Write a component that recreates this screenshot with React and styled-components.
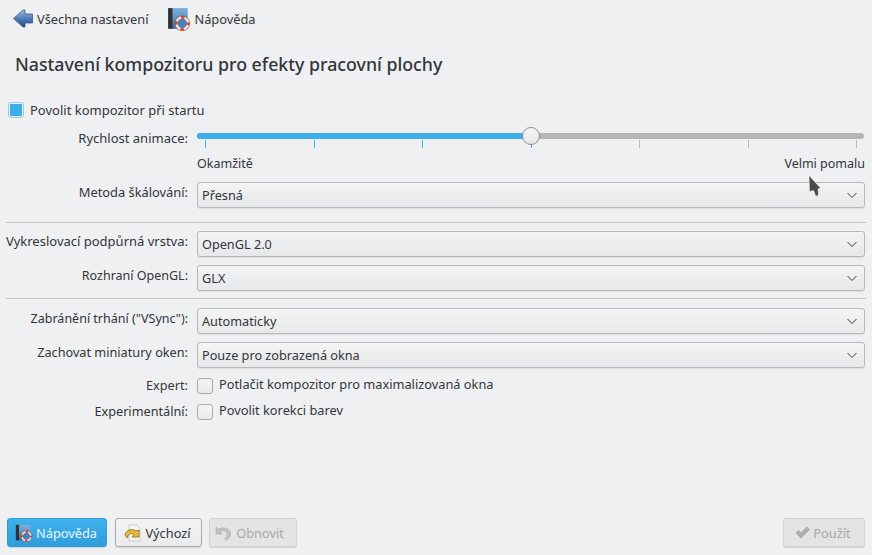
import React from 'react';
import styled, { createGlobalStyle } from 'styled-components';

const GlobalStyle = createGlobalStyle`
  html, body {
    margin: 0;
    padding: 0;
    background: #eff0f1;
  }
  body {
    font-family: "Noto Sans", "Open Sans", sans-serif;
    font-size: 13px;
    color: #31363b;
  }
`;

const Page = styled.div`
  position: relative;
  width: 872px;
  height: 555px;
  display: flex;
  flex-direction: column;
  box-sizing: border-box;
  overflow: hidden;
`;

const Toolbar = styled.div`
  display: flex;
  align-items: center;
  height: 38px;
  padding-left: 12px;
`;

const ToolItem = styled.div`
  display: flex;
  align-items: center;
  gap: 3px;
  margin-right: 19px;
  font-size: 12.8px;
  white-space: nowrap;
`;

const Title = styled.h1`
  margin: 0;
  padding: 14px 0 0 15px;
  height: 25px;
  line-height: 25px;
  font-size: 17.75px;
  font-weight: 500;
  white-space: nowrap;
`;

const TopCheck = styled.label`
  display: flex;
  align-items: center;
  gap: 6px;
  margin: 25px 0 0 8px;
  height: 16px;
`;

const CheckBox = styled.span`
  box-sizing: border-box;
  flex: none;
  width: 16px;
  height: 16px;
  border-radius: 3px;
  border: 1px solid ${p => (p.$on ? '#93cee9' : '#a9abad')};
  background: ${p => (p.$on ? '#eff0f1' : 'linear-gradient(#f4f5f5, #e8e9ea)')};
  padding: 1px;
  &::after {
    content: '';
    display: ${p => (p.$on ? 'block' : 'none')};
    width: 100%;
    height: 100%;
    background: #3daee9;
  }
`;

const Form = styled.div`
  display: grid;
  grid-template-columns: 188px 668px;
  column-gap: 9px;
  margin-top: 10px;
  align-items: start;
`;

const Label = styled.div`
  text-align: right;
  white-space: nowrap;
  font-size: ${p => p.$size || 12.7}px;
  line-height: ${p => p.$lh || 21}px;
`;

const Slider = styled.div`
  position: relative;
  height: 54px;
`;

const Track = styled.div`
  display: flex;
  height: 6px;
  margin: 5px 1px 0 0;
  border-radius: 3px;
  background: #b4b5b6;
  overflow: hidden;
`;

const TrackFill = styled.div`
  background: #3daee9;
`;

const Thumb = styled.div`
  position: absolute;
  box-sizing: border-box;
  top: -1px;
  width: 18px;
  height: 18px;
  margin-left: -9px;
  border-radius: 50%;
  border: 1px solid #8c8e90;
  background: linear-gradient(#f6f7f7, #e6e7e8);
`;

const Ticks = styled.div`
  display: flex;
  justify-content: space-between;
  padding: 1px 8px 0;
`;

const Tick = styled.span`
  width: 1px;
  height: 8px;
  background: ${p => (p.$on ? '#3daee9' : '#bcbdbe')};
`;

const SliderEnds = styled.div`
  display: flex;
  justify-content: space-between;
  margin-top: 7px;
  line-height: 18px;
  font-size: 12.5px;
`;

const Combo = styled.div`
  box-sizing: border-box;
  height: 26px;
  margin-bottom: ${p => p.$mb ?? 8}px;
  padding: 0 6px 0 4px;
  display: flex;
  align-items: center;
  justify-content: space-between;
  font-size: 12.7px;
  border: 1px solid #b6b8ba;
  border-radius: 3px;
  background: linear-gradient(#f3f4f4, #e7e8e9);
  box-shadow: 0 1px 1px rgba(0, 0, 0, 0.08);
`;

const Separator = styled.div`
  grid-column: 1 / -1;
  width: 860px;
  height: 1px;
  margin: ${p => p.$top}px 0 ${p => p.$bottom}px 6px;
  background: #c4c5c7;
`;

const CheckRow = styled.label`
  display: flex;
  align-items: center;
  gap: 6px;
  height: 15px;
  margin-bottom: 11px;
  font-size: 12.8px;
  white-space: nowrap;
`;

const CheckText = styled.span`
  margin-top: -2px;
  line-height: 15px;
`;

const Footer = styled.div`
  margin-top: auto;
  display: flex;
  padding: 0 7px 8px;
  gap: 7px;
`;

const Button = styled.button`
  box-sizing: border-box;
  height: 29px;
  width: ${p => p.$w}px;
  margin-left: ${p => p.$left || '0'};
  display: flex;
  align-items: center;
  justify-content: center;
  gap: 3px;
  padding: 0 ${p => p.$pr ?? 2}px 0 0;
  font: inherit;
  font-size: 12.8px;
  border-radius: 3px;
  color: ${p => (p.$primary ? '#eaf6fc' : p.$disabled ? '#a7a9ab' : '#31363b')};
  border: 1px solid ${p => (p.$primary ? '#2f9fd8' : p.$disabled ? '#d2d3d4' : '#a9abad')};
  background: ${p =>
    p.$primary
      ? 'linear-gradient(#3fb1ec, #2f9ddb)'
      : p.$disabled
        ? '#e3e4e5'
        : 'linear-gradient(#f3f4f4, #e9eaeb)'};
  box-shadow: 0 1px 1px rgba(0, 0, 0, 0.12);
`;

const Cursor = styled.svg`
  position: absolute;
  left: 808px;
  top: 175px;
`;

const Chevron = () => (
  <svg width="12" height="7" viewBox="0 0 12 7">
    <path d="M1.5 1 L6 5.5 L10.5 1" fill="none" stroke="#31363b" strokeWidth="1" />
  </svg>
);

const BackIcon = () => (
  <svg width="22" height="20" viewBox="0 0 22 20">
    <defs>
      <linearGradient id="back" x1="0" y1="0" x2="0" y2="1">
        <stop offset="0" stopColor="#9db8dc" />
        <stop offset="0.55" stopColor="#4a78b4" />
        <stop offset="1" stopColor="#25497f" />
      </linearGradient>
    </defs>
    <path
      d="M1.5 9.5 L11 1 H13 V5 H20.5 V14 H13 V18 H11 Z"
      fill="url(#back)"
      stroke="#2c4a78"
      strokeWidth="0.7"
    />
  </svg>
);

const HelpIcon = ({ size = 24 }) => (
  <svg width={size} height={size} viewBox="0 0 22 22">
    <defs>
      <linearGradient id="book" x1="0" y1="0" x2="0" y2="1">
        <stop offset="0" stopColor="#7fb0dc" />
        <stop offset="1" stopColor="#3a72a8" />
      </linearGradient>
    </defs>
    <rect x="1" y="1" width="5" height="19" fill="#2f3236" />
    <rect x="5" y="1" width="14" height="19" fill="url(#book)" />
    <circle cx="14" cy="15" r="5.5" fill="#4a7fb5" stroke="#e8e3df" strokeWidth="2.4" />
    <circle
      cx="14"
      cy="15"
      r="5.5"
      fill="none"
      stroke="#d8412f"
      strokeWidth="2.4"
      strokeDasharray="3.2 5.4"
      strokeDashoffset="1.6"
    />
    <circle cx="14" cy="15" r="6.9" fill="none" stroke="#a83226" strokeWidth="0.5" />
  </svg>
);

const DefaultsIcon = () => (
  <svg width="18" height="18" viewBox="0 0 18 18">
    <path d="M5 1 H13 L16 4 V17 H5 Z" fill="#f4f4f2" stroke="#c4c4c0" strokeWidth="0.8" />
    <path
      d="M1 11 C2 6 8 4 12 7 L15 6 V13 H8 L10 10.5 C8 9 5 9.5 4 12 L3 14 Z"
      fill="#e9b93a"
      stroke="#8a6a1e"
      strokeWidth="0.8"
    />
  </svg>
);

const ResetIcon = () => (
  <svg width="18" height="18" viewBox="0 0 18 18">
    <path
      d="M1 3 V10 H7 L5 7.5 C8 5.5 12 7 12 10 C12 12 11 13.5 9.5 14.5 L11.5 16 C14.5 14.5 16 12 15.5 9 C15 4.5 9 2.5 3.5 5 Z"
      fill="#c2c3c4"
      stroke="#a9aaab"
      strokeWidth="0.6"
    />
  </svg>
);

const ApplyIcon = () => (
  <svg width="15" height="13" viewBox="0 0 15 13">
    <path d="M1 7 L3.5 4.5 L6 7 L12 1 L14.5 3.5 L6 12 Z" fill="#aeafb0" stroke="#98999a" strokeWidth="0.6" />
  </svg>
);

const ticks = [1, 1, 1, 1, 0, 0, 0];

function App() {
  const speed = 50;

  return (
    <Page>
      <GlobalStyle />
      <Toolbar>
        <ToolItem>
          <BackIcon />
          <span>Všechna nastavení</span>
        </ToolItem>
        <ToolItem>
          <HelpIcon />
          <span>Nápověda</span>
        </ToolItem>
      </Toolbar>
      <Title>Nastavení kompozitoru pro efekty pracovní plochy</Title>
      <TopCheck>
        <CheckBox $on />
        <span>Povolit kompozitor při startu</span>
      </TopCheck>
      <Form>
        <Label $size={13}>Rychlost animace:</Label>
        <Slider>
          <Track>
            <TrackFill style={{ width: `${speed}%` }} />
          </Track>
          <Thumb style={{ left: `${speed}%` }} />
          <Ticks>
            {ticks.map((on, i) => (
              <Tick key={i} $on={on} />
            ))}
          </Ticks>
          <SliderEnds>
            <span>Okamžitě</span>
            <span>Velmi pomalu</span>
          </SliderEnds>
        </Slider>

        <Label $size={12.85}>Metoda škálování:</Label>
        <Combo $mb={0}>
          <span>Přesná</span>
          <Chevron />
        </Combo>

        <Separator $top={14} $bottom={8} />

        <Label $size={13}>Vykreslovací podpůrná vrstva:</Label>
        <Combo>
          <span>OpenGL 2.0</span>
          <Chevron />
        </Combo>

        <Label $size={12.5}>Rozhraní OpenGL:</Label>
        <Combo $mb={0}>
          <span>GLX</span>
          <Chevron />
        </Combo>

        <Separator $top={7} $bottom={9} />

        <Label $size={12.5}>Zabránění trhání ("VSync"):</Label>
        <Combo>
          <span>Automaticky</span>
          <Chevron />
        </Combo>

        <Label>Zachovat miniatury oken:</Label>
        <Combo $mb={10}>
          <span>Pouze pro zobrazená okna</span>
          <Chevron />
        </Combo>

        <Label $lh={15}>Expert:</Label>
        <CheckRow>
          <CheckBox />
          <CheckText>Potlačit kompozitor pro maximalizovaná okna</CheckText>
        </CheckRow>

        <Label $lh={15}>Experimentální:</Label>
        <CheckRow>
          <CheckBox />
          <CheckText>Povolit korekci barev</CheckText>
        </CheckRow>
      </Form>
      <Footer>
        <Button $primary $w={100} $left="0">
          <HelpIcon size={18} />
          Nápověda
        </Button>
        <Button $w={87} $left="1px">
          <DefaultsIcon />
          Výchozí
        </Button>
        <Button $disabled $w={88} $pr={7}>
          <ResetIcon />
          Obnovit
        </Button>
        <Button $disabled $left="auto" $w={82}>
          <ApplyIcon />
          Použít
        </Button>
      </Footer>
      <Cursor width="15" height="23" viewBox="0 0 15 23">
        <path
          d="M1 0.5 L12.5 13 L10 14 L10.5 20 L8 21.5 L5.5 15.5 L1.5 16.5 Z"
          fill="#4a4b4d"
          stroke="#f7f7f7"
          strokeWidth="0.5"
        />
      </Cursor>
    </Page>
  );
}

export default App;
